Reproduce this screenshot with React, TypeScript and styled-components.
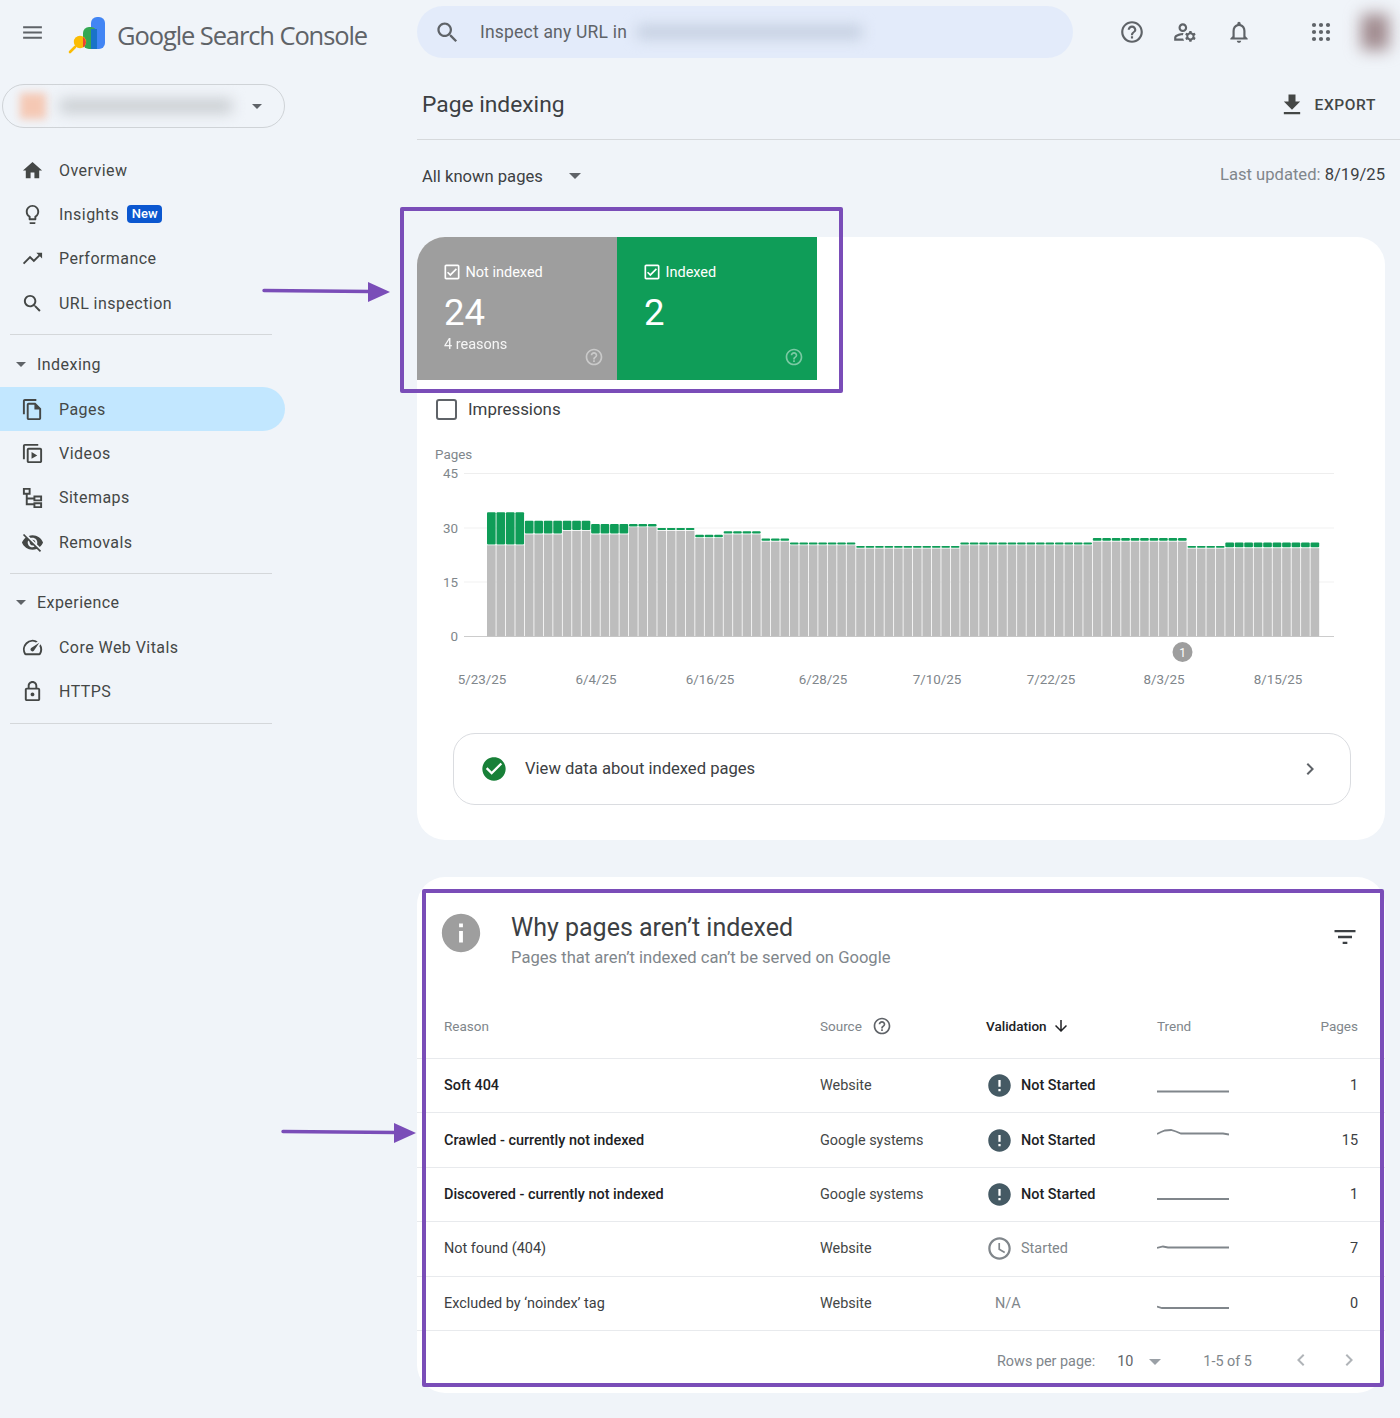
import React from "react";
import styled, { createGlobalStyle } from "styled-components";

const GlobalStyle = createGlobalStyle`
  html, body {
    margin: 0;
    padding: 0;
    background: #f0f4f9;
    font-family: "Roboto", "Liberation Sans", sans-serif;
    color: #3c4043;
  }
`;

const paths = {
  menu: "M3 18h18v-2H3v2zm0-5h18v-2H3v2zm0-7v2h18V6H3z",
  search: "M15.5 14h-.79l-.28-.27C15.41 12.59 16 11.11 16 9.5 16 5.91 13.09 3 9.5 3S3 5.91 3 9.5 5.91 16 9.5 16c1.61 0 3.09-.59 4.23-1.57l.27.28v.79l5 4.99L20.49 19l-4.99-5zm-6 0C7.01 14 5 11.99 5 9.5S7.01 5 9.5 5 14 7.01 14 9.5 11.99 14 9.5 14z",
  help: "M11 18h2v-2h-2v2zm1-16C6.48 2 2 6.48 2 12s4.48 10 10 10 10-4.48 10-10S17.52 2 12 2zm0 18c-4.41 0-8-3.59-8-8s3.59-8 8-8 8 3.59 8 8-3.59 8-8 8zm0-14c-2.21 0-4 1.79-4 4h2c0-1.1.9-2 2-2s2 .9 2 2c0 2-3 1.75-3 5h2c0-2.25 3-2.5 3-5 0-2.21-1.79-4-4-4z",
  manage: "M4 18v-.65c0-.34.16-.66.41-.81C6.1 15.53 8.03 15 10 15c.03 0 .05 0 .08.01.1-.7.3-1.37.59-1.98-.22-.02-.44-.03-.67-.03-2.42 0-4.68.67-6.61 1.82-.88.52-1.39 1.5-1.39 2.53V20h9.26c-.42-.6-.75-1.28-.97-2H4zM10 12c2.21 0 4-1.79 4-4s-1.79-4-4-4-4 1.79-4 4 1.79 4 4 4zm0-6c1.1 0 2 .9 2 2s-.9 2-2 2-2-.9-2-2 .9-2 2-2zM20.75 16c0-.22-.03-.42-.06-.63l1.14-1.01-1-1.73-1.45.49c-.32-.27-.68-.48-1.08-.63L18 11h-2l-.3 1.49c-.4.15-.76.36-1.08.63l-1.45-.49-1 1.73 1.14 1.01c-.03.21-.06.41-.06.63s.03.42.06.63l-1.14 1.01 1 1.73 1.45-.49c.32.27.68.48 1.08.63L16 21h2l.3-1.49c.4-.15.76-.36 1.08-.63l1.45.49 1-1.73-1.14-1.01c.03-.21.06-.41.06-.63zM17 18c-1.1 0-2-.9-2-2s.9-2 2-2 2 .9 2 2-.9 2-2 2z",
  bell: "M12 22c1.1 0 2-.9 2-2h-4c0 1.1.9 2 2 2zm6-6v-5c0-3.07-1.63-5.64-4.5-6.32V4c0-.83-.67-1.5-1.5-1.5s-1.5.67-1.5 1.5v.68C7.64 5.36 6 7.92 6 11v5l-2 2v1h16v-1l-2-2zm-2 1H8v-6c0-2.48 1.51-4.5 4-4.5s4 2.02 4 4.5v6z",
  home: "M10 20v-6h4v6h5v-8h3L12 3 2 12h3v8z",
  bulb: "M9 21c0 .5.4 1 1 1h4c.6 0 1-.5 1-1v-1H9v1zm3-19C8.1 2 5 5.1 5 9c0 2.4 1.2 4.5 3 5.7V17c0 .5.4 1 1 1h6c.6 0 1-.5 1-1v-2.3c1.8-1.3 3-3.4 3-5.7 0-3.9-3.1-7-7-7zm2.9 11.1l-.9.6V16h-4v-2.3l-.9-.6C7.8 12.2 7 10.6 7 9c0-2.8 2.2-5 5-5s5 2.2 5 5c0 1.6-.8 3.2-2.1 4.1z",
  trending: "M16 6l2.29 2.29-4.88 4.88-4-4L2 16.59 3.41 18l6-6 4 4 6.3-6.29L22 12V6z",
  pages: "M16 1H4c-1.1 0-2 .9-2 2v14h2V3h12V1zm-1 4H8c-1.1 0-1.99.9-1.99 2L6 21c0 1.1.89 2 1.99 2H19c1.1 0 2-.9 2-2V11l-6-6zM8 21V7h6v5h5v9H8z",
  videos: "M4 2h14v2H4v14H2V4c0-1.1.9-2 2-2zm4 4h12c1.1 0 2 .9 2 2v12c0 1.1-.9 2-2 2H8c-1.1 0-2-.9-2-2V8c0-1.1.9-2 2-2zm0 2v12h12V8H8zm3 2.5l6 3.5-6 3.5v-7z",
  sitemap: "M2 2h8v7H7v3h6v-2h9v6h-9v-2H7v4h6v-1h9v6h-9v-3H5V9H2V2zm2 2v3h4V4H4zm11 8v2h5v-2h-5zm0 7v2h5v-2h-5z",
  eyeOff: "M12 7c2.76 0 5 2.24 5 5 0 .65-.13 1.26-.36 1.83l2.92 2.92c1.51-1.26 2.7-2.89 3.43-4.75-1.73-4.39-6-7.5-11-7.5-1.4 0-2.74.25-3.98.7l2.16 2.16C10.74 7.13 11.35 7 12 7zM2 4.27l2.28 2.28.46.46C3.08 8.3 1.78 10.02 1 12c1.73 4.39 6 7.5 11 7.5 1.55 0 3.03-.3 4.38-.84l.42.42L19.73 22 21 20.73 3.27 3 2 4.27zM7.53 9.8l1.55 1.55c-.05.21-.08.43-.08.65 0 1.66 1.34 3 3 3 .22 0 .44-.03.65-.08l1.55 1.55c-.67.33-1.41.53-2.2.53-2.76 0-5-2.24-5-5 0-.79.2-1.53.53-2.2zm4.31-.78l3.15 3.15.02-.16c0-1.66-1.34-3-3-3l-.17.01z",
  speed: "M20.38 8.57l-1.23 1.85a8 8 0 0 1-.22 7.58H5.07A8 8 0 0 1 15.58 6.85l1.85-1.23A10 10 0 0 0 3.35 19a2 2 0 0 0 1.72 1h13.85a2 2 0 0 0 1.74-1 10 10 0 0 0-.27-10.44zm-9.79 6.84a2 2 0 0 0 2.83 0l5.66-8.49-8.49 5.66a2 2 0 0 0 0 2.83z",
  lock: "M18 8h-1V6c0-2.76-2.24-5-5-5S7 3.24 7 6v2H6c-1.1 0-2 .9-2 2v10c0 1.1.9 2 2 2h12c1.1 0 2-.9 2-2V10c0-1.1-.9-2-2-2zM9 6c0-1.66 1.34-3 3-3s3 1.34 3 3v2H9V6zm9 14H6V10h12v10zm-6-3c1.1 0 2-.9 2-2s-.9-2-2-2-2 .9-2 2 .9 2 2 2z",
  download: "M19 9h-4V3H9v6H5l7 7 7-7zM5 18v2h14v-2H5z",
  checkBox: "M19 3H5c-1.1 0-2 .9-2 2v14c0 1.1.9 2 2 2h14c1.1 0 2-.9 2-2V5c0-1.1-.9-2-2-2zm0 16H5V5h14v14zM17.99 9l-1.41-1.42-6.59 6.59-2.58-2.57-1.42 1.41 4 3.99z",
  checkCircle: "M12 2C6.48 2 2 6.48 2 12s4.48 10 10 10 10-4.48 10-10S17.52 2 12 2zm-2 15l-5-5 1.41-1.41L10 14.17l7.59-7.59L19 8l-9 9z",
  chevronRight: "M10 6L8.59 7.41 13.17 12l-4.58 4.59L10 18l6-6z",
  chevronLeft: "M15.41 7.41L14 6l-6 6 6 6 1.41-1.41L10.83 12z",
  info: "M12 2C6.48 2 2 6.48 2 12s4.48 10 10 10 10-4.48 10-10S17.52 2 12 2zm1 15h-2v-6h2v6zm0-8h-2V7h2v2z",
  filter: "M10 18h4v-2h-4v2zM3 6v2h18V6H3zm3 7h12v-2H6v2z",
  arrowDown: "M20 12l-1.41-1.41L13 16.17V4h-2v12.17l-5.58-5.59L4 12l8 8 8-8z",
  error: "M12 2C6.48 2 2 6.48 2 12s4.48 10 10 10 10-4.48 10-10S17.52 2 12 2zm1 15h-2v-2h2v2zm0-4h-2V7h2v6z",
  clock: "M11.99 2C6.47 2 2 6.48 2 12s4.47 10 9.99 10C17.52 22 22 17.52 22 12S17.52 2 11.99 2zM12 20c-4.42 0-8-3.58-8-8s3.58-8 8-8 8 3.58 8 8-3.58 8-8 8zm.5-13H11v6l5.25 3.15.75-1.23-4.5-2.67z",
};

const IconSvg = styled.svg<{ $size: number; $color: string; $fade?: number }>`
  width: ${(p) => p.$size}px;
  height: ${(p) => p.$size}px;
  fill: ${(p) => p.$color};
  opacity: ${(p) => p.$fade ?? 1};
  flex: none;
  display: block;
`;

function Icon({ name, size = 24, color = "#444746", fade }: { name: keyof typeof paths; size?: number; color?: string; fade?: number }) {
  return (
    <IconSvg viewBox="0 0 24 24" $size={size} $color={color} $fade={fade}>
      <path d={paths[name]} />
    </IconSvg>
  );
}

const Page = styled.div`
  position: relative;
  width: 1400px;
  height: 1418px;
  overflow: hidden;
  background: #f0f4f9;
`;

const TopBar = styled.header`
  display: flex;
  align-items: center;
  height: 64px;
`;

const Brand = styled.div`
  display: flex;
  align-items: center;
  width: 417px;
  flex: none;
  padding-left: 20px;
  box-sizing: border-box;
`;

const BrandName = styled.span`
  font-family: "Open Sans", sans-serif;
  font-size: 25.5px;
  letter-spacing: -1.1px;
  color: #5f6368;
  margin-left: 9px;
  padding-top: 6px;
  white-space: nowrap;
`;

const LogoSvg = styled.svg`
  width: 40px;
  height: 40px;
  margin: 7px 0 0 23px;
  flex: none;
`;

const SearchBar = styled.div`
  display: flex;
  align-items: center;
  width: 656px;
  height: 52px;
  flex: none;
  border-radius: 26px;
  background: #e3ebfa;
  padding-left: 17px;
  box-sizing: border-box;
`;

const SearchText = styled.span`
  font-size: 17.5px;
  letter-spacing: 0.2px;
  color: #5f6368;
  margin-left: 19px;
`;

const BlurBlock = styled.div<{ $w: number; $h: number; $color: string; $blur: number; $ml: number }>`
  width: ${(p) => p.$w}px;
  height: ${(p) => p.$h}px;
  background: ${(p) => p.$color};
  filter: blur(${(p) => p.$blur}px);
  margin-left: ${(p) => p.$ml}px;
  flex: none;
`;

const TopIcons = styled.div`
  display: flex;
  align-items: center;
  margin-left: 46px;
`;

const TopIcon = styled.span<{ $w: number }>`
  display: flex;
  width: ${(p) => p.$w}px;
  flex: none;
`;

const AppsGrid = styled.svg`
  width: 20px;
  height: 20px;
  fill: #5f6368;
  flex: none;
`;

const Body = styled.div`
  display: grid;
  grid-template-columns: 417px 983px;
`;

const Sidebar = styled.nav`
  display: flex;
  flex-direction: column;
  padding-top: 20px;
`;

const Property = styled.div`
  display: flex;
  align-items: center;
  width: 283px;
  height: 44px;
  margin-left: 2px;
  border: 1px solid #cfd3d7;
  border-radius: 22px;
  box-sizing: border-box;
  padding-left: 17px;
`;

const Caret = styled.span<{ $color?: string; $w?: number; $ml?: number }>`
  display: block;
  width: 0;
  height: 0;
  flex: none;
  border-left: ${(p) => p.$w ?? 5}px solid transparent;
  border-right: ${(p) => p.$w ?? 5}px solid transparent;
  border-top: ${(p) => p.$w ?? 5}px solid ${(p) => p.$color ?? "#5f6368"};
  margin-left: ${(p) => p.$ml ?? 0}px;
`;

const NavGroup = styled.div<{ $top: number }>`
  display: flex;
  flex-direction: column;
  margin-top: ${(p) => p.$top}px;
`;

const NavItem = styled.div<{ $active?: boolean }>`
  display: flex;
  align-items: center;
  width: 285px;
  height: 44.3px;
  box-sizing: border-box;
  padding-left: 21px;
  border-radius: 0 22px 22px 0;
  background: ${(p) => (p.$active ? "#c2e7ff" : "transparent")};
  font-size: 16px;
  font-weight: 400;
  letter-spacing: 0.45px;
  color: #444746;
`;

const NavLabel = styled.span`
  margin-left: 15px;
`;

const NewBadge = styled.span`
  background: #0b57d0;
  color: #fff;
  font-size: 13px;
  font-weight: 500;
  letter-spacing: 0;
  line-height: 18px;
  padding: 0 4.5px;
  border-radius: 4px;
  margin-left: 8px;
`;

const NavDivider = styled.div<{ $top: number }>`
  width: 262px;
  height: 1px;
  background: #d4d7da;
  margin: ${(p) => p.$top}px 0 0 10px;
`;

const SectionTitle = styled.div<{ $top: number }>`
  display: flex;
  align-items: center;
  height: 24px;
  margin-top: ${(p) => p.$top}px;
  padding-left: 16px;
  font-size: 16px;
  letter-spacing: 0.45px;
  color: #444746;
`;

const SectionLabel = styled.span`
  margin-left: 11px;
`;

const Main = styled.main`
  display: flex;
  flex-direction: column;
`;

const PageHead = styled.div`
  display: flex;
  align-items: center;
  justify-content: space-between;
  height: 76px;
  box-sizing: border-box;
  border-bottom: 1px solid #d6d9dc;
  padding: 6px 24px 0 5px;
`;

const PageTitle = styled.h1`
  margin: 0;
  font-size: 22.8px;
  font-weight: 400;
  color: #3c4043;
`;

const ExportButton = styled.div`
  display: flex;
  align-items: center;
  gap: 9px;
  font-size: 15.5px;
  font-weight: 500;
  letter-spacing: 0.6px;
  color: #444746;
`;

const FilterRow = styled.div`
  display: flex;
  align-items: center;
  justify-content: space-between;
  height: 97px;
  padding: 0 15px 25px 5px;
  box-sizing: border-box;
`;

const FilterSelect = styled.div`
  display: flex;
  align-items: center;
  font-size: 16.6px;
  color: #3c4043;
`;

const Updated = styled.div`
  font-size: 16.6px;
  color: #80868b;
  margin-top: -3px;
`;

const UpdatedDate = styled.span`
  color: #3c4043;
`;

const Card = styled.section<{ $height: number }>`
  display: flex;
  flex-direction: column;
  width: 968px;
  height: ${(p) => p.$height}px;
  background: #fff;
  border-radius: 28px;
  overflow: hidden;
  flex: none;
`;

const Tiles = styled.div`
  display: flex;
  height: 143px;
  flex: none;
`;

const Tile = styled.div<{ $bg: string }>`
  position: relative;
  width: 200px;
  box-sizing: border-box;
  padding: 25px 27px 0;
  background: ${(p) => p.$bg};
  color: #fff;
`;

const TileLabel = styled.div`
  display: flex;
  align-items: center;
  gap: 4px;
  height: 20px;
  margin-left: -2.5px;
  font-size: 14.5px;
`;

const TileValue = styled.div`
  font-size: 36.5px;
  line-height: 44px;
  margin-top: 9px;
`;

const TileNote = styled.div`
  font-size: 14.5px;
  line-height: 20px;
  opacity: 0.9;
`;

const TileHelp = styled.div`
  position: absolute;
  right: 13px;
  bottom: 13px;
`;

const CheckRow = styled.div`
  display: flex;
  align-items: center;
  gap: 11px;
  height: 22px;
  margin: 18px 0 0 19px;
  font-size: 16.9px;
  color: #3c4043;
`;

const EmptyCheck = styled.span`
  display: block;
  width: 21px;
  height: 21px;
  box-sizing: border-box;
  border: 2px solid #5f6368;
  border-radius: 3px;
`;

const ChartSvg = styled.svg`
  display: block;
  width: 968px;
  height: 250px;
  margin-top: 25px;
  flex: none;
`;

const ChartText = styled.text`
  font-family: "Roboto", sans-serif;
  font-size: 13.4px;
  fill: #80868b;
`;

const ViewData = styled.div`
  display: flex;
  align-items: center;
  height: 72px;
  margin: 38px 34px 0 36px;
  padding: 0 28px 0 26px;
  box-sizing: border-box;
  border: 1px solid #dadce0;
  border-radius: 22px;
  font-size: 16.6px;
  color: #3c4043;
`;

const ViewDataText = styled.span`
  flex: 1;
  margin-left: 17px;
  padding-bottom: 2px;
`;

const ReasonsCard = styled(Card)`
  margin-top: 37px;
`;

const ReasonsHead = styled.div`
  display: flex;
  height: 120px;
  box-sizing: border-box;
  padding: 33px 27px 0 21px;
  flex: none;
`;

const ReasonsText = styled.div`
  flex: 1;
  margin-left: 27px;
`;

const ReasonsTitle = styled.h2`
  margin: 2px 0 0;
  font-size: 25px;
  font-weight: 400;
  line-height: 32px;
  color: #3c4043;
`;

const ReasonsSub = styled.div`
  font-size: 16.6px;
  line-height: 24px;
  margin-top: 2px;
  color: #80868b;
`;

const FilterIcon = styled.div`
  margin: 13px -1px 0 0;
`;

const Row = styled.div<{ $header?: boolean }>`
  display: grid;
  grid-template-columns: 376px 166px 171px 1fr auto;
  align-items: center;
  height: ${(p) => (p.$header ? "62px" : "54.4px")};
  box-sizing: border-box;
  padding: 0 27px ${(p) => (p.$header ? "3px" : "0")};
  border-bottom: 1px solid #e8eaed;
  font-size: 14.45px;
  color: #444746;
  flex: none;
`;

const HeadCell = styled.div<{ $strong?: boolean; $gap?: number }>`
  display: flex;
  align-items: center;
  gap: ${(p) => p.$gap ?? 8}px;
  font-size: 13.5px;
  font-weight: ${(p) => (p.$strong ? 500 : 400)};
  color: ${(p) => (p.$strong ? "#202124" : "#80868b")};
  justify-content: flex-start;
`;

const ReasonCell = styled.div<{ $strong?: boolean }>`
  font-weight: ${(p) => (p.$strong ? 500 : 400)};
  color: ${(p) => (p.$strong ? "#202124" : "#3c4043")};
`;

const StatusCell = styled.div<{ $tone: "strong" | "muted" | "none" }>`
  display: flex;
  align-items: center;
  gap: 8px;
  font-weight: ${(p) => (p.$tone === "strong" ? 500 : 400)};
  color: ${(p) => (p.$tone === "strong" ? "#202124" : "#80868b")};
  padding-left: ${(p) => (p.$tone === "none" ? "9px" : "0")};
`;

const TrendSvg = styled.svg`
  display: block;
  width: 72px;
  height: 30px;
  fill: none;
  stroke: #80868b;
  stroke-width: 1.8;
`;

const CountCell = styled.div`
  text-align: right;
  color: #3c4043;
`;

const Pager = styled.div`
  display: flex;
  align-items: center;
  height: 62px;
  padding-left: 580px;
  font-size: 14.4px;
  color: #80868b;
`;

const PagerValue = styled.span`
  color: #5f6368;
  margin-left: 22px;
`;

const PagerRange = styled.span`
  margin-left: 42.5px;
`;

const PagerNav = styled.div`
  display: flex;
  gap: 24px;
  margin: -4px 0 0 37px;
`;

const Highlight = styled.div<{ $x: number; $y: number; $w: number; $h: number }>`
  position: absolute;
  left: ${(p) => p.$x}px;
  top: ${(p) => p.$y}px;
  width: ${(p) => p.$w}px;
  height: ${(p) => p.$h}px;
  box-sizing: border-box;
  border: 4px solid #7a4db8;
  border-radius: 2px;
  pointer-events: none;
`;

const ArrowSvg = styled.svg<{ $x: number; $y: number; $w: number }>`
  position: absolute;
  left: ${(p) => p.$x}px;
  top: ${(p) => p.$y}px;
  width: ${(p) => p.$w}px;
  height: 24px;
`;

const navTop = [
  { icon: "home", label: "Overview" },
  { icon: "bulb", label: "Insights", badge: true },
  { icon: "trending", label: "Performance" },
  { icon: "search", label: "URL inspection" },
] as const;

const navIndexing = [
  { icon: "pages", label: "Pages", active: true },
  { icon: "videos", label: "Videos" },
  { icon: "sitemap", label: "Sitemaps" },
  { icon: "eyeOff", label: "Removals" },
] as const;

const navExperience = [
  { icon: "speed", label: "Core Web Vitals" },
  { icon: "lock", label: "HTTPS" },
] as const;

function NavRow({ icon, label, active, badge }: { icon: keyof typeof paths; label: string; active?: boolean; badge?: boolean }) {
  return (
    <NavItem $active={active}>
      <Icon name={icon} size={23} />
      <NavLabel>{label}</NavLabel>
      {badge && <NewBadge>New</NewBadge>}
    </NavItem>
  );
}

// count of bars, not indexed, not indexed + indexed
const barGroups = [
  [4, 25.2, 34.3], [4, 28.2, 32], [3, 29.2, 32], [4, 28.2, 31.1], [3, 30.2, 31.1],
  [4, 29.2, 30], [3, 27.2, 28.1], [4, 28.2, 29.1], [3, 26.2, 27.1], [7, 25.2, 26],
  [11, 24.3, 25], [14, 25.2, 26], [10, 26.2, 27.2], [4, 24.3, 25], [10, 24.4, 26],
];

const bars = barGroups.flatMap(([n, low, top]) => Array.from({ length: n }, () => ({ low, top })));

const BASE = 636.5;
const UNIT = 3.62;
const BAR_W = 833 / 88;

const yTicks = [
  { v: "45", y: 473.5, line: "#eeeeee" },
  { v: "30", y: 528, line: "#f1f1f1" },
  { v: "15", y: 582, line: "#f1f1f1" },
  { v: "0", y: 636.5, line: "#cccccc" },
];

const xTicks = [
  { t: "5/23/25", x: 482 },
  { t: "6/4/25", x: 596 },
  { t: "6/16/25", x: 710 },
  { t: "6/28/25", x: 823 },
  { t: "7/10/25", x: 937 },
  { t: "7/22/25", x: 1051 },
  { t: "8/3/25", x: 1164 },
  { t: "8/15/25", x: 1278 },
];

function Chart() {
  return (
    <ChartSvg viewBox="417 445 968 250">
      <ChartText x="435" y="459">Pages</ChartText>
      {yTicks.map((t) => (
        <g key={t.v}>
          <line x1="464" x2="1334" y1={t.y} y2={t.y} stroke={t.line} strokeWidth="1" />
          <ChartText x="458" y={t.y + 4.5} textAnchor="end">{t.v}</ChartText>
        </g>
      ))}
      {bars.map((b, i) => {
        const x = 487 + i * BAR_W;
        const lowY = BASE - b.low * UNIT;
        const topY = BASE - b.top * UNIT;
        return (
          <g key={i}>
            <rect x={x} y={lowY} width={BAR_W - 0.8} height={BASE - lowY} fill="#bdbdbd" />
            <rect x={x} y={topY} width={BAR_W - 0.8} height={Math.max(lowY - topY - 0.8, 1.2)} rx="1" fill="#0f9d58" />
          </g>
        );
      })}
      <circle cx="1182.5" cy="652" r="10" fill="#9e9e9e" />
      <text x="1182.5" y="656.5" textAnchor="middle" fontSize="12" fontFamily="Roboto, sans-serif" fill="#fff">1</text>
      {xTicks.map((t) => (
        <ChartText key={t.t} x={t.x} y="683.5" textAnchor="middle">{t.t}</ChartText>
      ))}
    </ChartSvg>
  );
}

const rows = [
  { reason: "Soft 404", source: "Website", status: "Not Started", tone: "strong", count: "1", trend: "0,20.5 72,20.5" },
  { reason: "Crawled - currently not indexed", source: "Google systems", status: "Not Started", tone: "strong", count: "15", trend: "0,9 4,7 8,5.5 14,5 19,6.5 24,8.5 40,8.5 66,8.5 72,9.5" },
  { reason: "Discovered - currently not indexed", source: "Google systems", status: "Not Started", tone: "strong", count: "1", trend: "0,20 72,20" },
  { reason: "Not found (404)", source: "Website", status: "Started", tone: "muted", count: "7", trend: "0,14 6,12.5 11,13.5 72,13.5" },
  { reason: "Excluded by ‘noindex’ tag", source: "Website", status: "N/A", tone: "none", count: "0", trend: "0,18.5 5,20 72,20" },
] as const;

export default function App() {
  return (
    <Page>
      <GlobalStyle />
      <TopBar>
        <Brand>
          <Icon name="menu" size={25} color="#5f6368" />
          <LogoSvg viewBox="0 0 40 40">
            <rect x="23" y="1" width="14" height="32" rx="6" fill="#4285f4" />
            <rect x="15" y="11" width="14" height="22" rx="6" fill="#34a853" />
            <rect x="23" y="13" width="6" height="20" fill="#1a73c8" />
            <path d="M7 31 L2 36" stroke="#fbbc04" strokeWidth="2.6" strokeLinecap="round" />
            <circle cx="12" cy="26" r="6.2" fill="#fbbc04" />
            <path d="M15 21 a6.2 6.2 0 0 1 0 10.4z" fill="#ea4335" />
          </LogoSvg>
          <BrandName>Google Search Console</BrandName>
        </Brand>
        <SearchBar>
          <Icon name="search" size={27} color="#5f6368" />
          <SearchText>Inspect any URL in</SearchText>
          <BlurBlock $w={225} $h={14} $color="#c5cfe0" $blur={7} $ml={10} />
        </SearchBar>
        <TopIcons>
          <TopIcon $w={53}><Icon name="help" size={26} color="#5f6368" /></TopIcon>
          <TopIcon $w={54}><Icon name="manage" size={26} color="#5f6368" /></TopIcon>
          <TopIcon $w={85}><Icon name="bell" size={26} color="#5f6368" /></TopIcon>
          <AppsGrid viewBox="0 0 20 20">
            {[3, 10, 17].flatMap((y) => [3, 10, 17].map((x) => <circle key={`${x}-${y}`} cx={x} cy={y} r="2.1" />))}
          </AppsGrid>
          <BlurBlock $w={28} $h={36} $color="#a08a8e" $blur={8} $ml={30} />
        </TopIcons>
      </TopBar>
      <Body>
        <Sidebar>
          <Property>
            <BlurBlock $w={26} $h={26} $color="#f5c8b4" $blur={4} $ml={0} />
            <BlurBlock $w={172} $h={14} $color="#c8ccd0" $blur={7} $ml={14} />
            <Caret $ml={20} />
          </Property>
          <NavGroup $top={20}>
            {navTop.map((n) => (
              <NavRow key={n.label} icon={n.icon} label={n.label} badge={"badge" in n} />
            ))}
          </NavGroup>
          <NavDivider $top={9} />
          <SectionTitle $top={17}>
            <Caret />
            <SectionLabel>Indexing</SectionLabel>
          </SectionTitle>
          <NavGroup $top={11}>
            {navIndexing.map((n) => (
              <NavRow key={n.label} icon={n.icon} label={n.label} active={"active" in n} />
            ))}
          </NavGroup>
          <NavDivider $top={9} />
          <SectionTitle $top={16}>
            <Caret />
            <SectionLabel>Experience</SectionLabel>
          </SectionTitle>
          <NavGroup $top={11}>
            {navExperience.map((n) => (
              <NavRow key={n.label} icon={n.icon} label={n.label} />
            ))}
          </NavGroup>
          <NavDivider $top={9} />
        </Sidebar>
        <Main>
          <PageHead>
            <PageTitle>Page indexing</PageTitle>
            <ExportButton>
              <Icon name="download" size={28} color="#444746" />
              EXPORT
            </ExportButton>
          </PageHead>
          <FilterRow>
            <FilterSelect>
              All known pages
              <Caret $w={6.5} $ml={26} />
            </FilterSelect>
            <Updated>
              Last updated: <UpdatedDate>8/19/25</UpdatedDate>
            </Updated>
          </FilterRow>
          <Card $height={603}>
            <Tiles>
              <Tile $bg="#9e9e9e">
                <TileLabel>
                  <Icon name="checkBox" size={20} color="#fff" />
                  Not indexed
                </TileLabel>
                <TileValue>24</TileValue>
                <TileNote>4 reasons</TileNote>
                <TileHelp><Icon name="help" size={20} color="#fff" fade={0.45} /></TileHelp>
              </Tile>
              <Tile $bg="#0f9d58">
                <TileLabel>
                  <Icon name="checkBox" size={20} color="#fff" />
                  Indexed
                </TileLabel>
                <TileValue>2</TileValue>
                <TileHelp><Icon name="help" size={20} color="#fff" fade={0.45} /></TileHelp>
              </Tile>
            </Tiles>
            <CheckRow>
              <EmptyCheck />
              Impressions
            </CheckRow>
            <Chart />
            <ViewData>
              <Icon name="checkCircle" size={28} color="#188038" />
              <ViewDataText>View data about indexed pages</ViewDataText>
              <Icon name="chevronRight" size={24} color="#5f6368" />
            </ViewData>
          </Card>
          <ReasonsCard $height={516}>
            <ReasonsHead>
              <Icon name="info" size={46} color="#9e9e9e" />
              <ReasonsText>
                <ReasonsTitle>Why pages aren’t indexed</ReasonsTitle>
                <ReasonsSub>Pages that aren’t indexed can’t be served on Google</ReasonsSub>
              </ReasonsText>
              <FilterIcon><Icon name="filter" size={28} color="#3c4043" /></FilterIcon>
            </ReasonsHead>
            <Row $header>
              <HeadCell>Reason</HeadCell>
              <HeadCell $gap={10}>
                Source
                <Icon name="help" size={20} color="#5f6368" />
              </HeadCell>
              <HeadCell $strong $gap={5}>
                Validation
                <Icon name="arrowDown" size={18} color="#202124" />
              </HeadCell>
              <HeadCell>Trend</HeadCell>
              <HeadCell>Pages</HeadCell>
            </Row>
            {rows.map((r) => (
              <Row key={r.reason}>
                <ReasonCell $strong={r.tone === "strong"}>{r.reason}</ReasonCell>
                <div>{r.source}</div>
                <StatusCell $tone={r.tone}>
                  {r.tone === "strong" && <Icon name="error" size={27} color="#455a64" />}
                  {r.tone === "muted" && <Icon name="clock" size={27} color="#80868b" />}
                  {r.status}
                </StatusCell>
                <TrendSvg viewBox="0 0 72 30">
                  <polyline points={r.trend} />
                </TrendSvg>
                <CountCell>{r.count}</CountCell>
              </Row>
            ))}
            <Pager>
              Rows per page:
              <PagerValue>10</PagerValue>
              <Caret $color="#9aa0a6" $w={6.5} $ml={15.5} />
              <PagerRange>1-5 of 5</PagerRange>
              <PagerNav>
                <Icon name="chevronLeft" size={24} color="#b0b4b8" />
                <Icon name="chevronRight" size={24} color="#b0b4b8" />
              </PagerNav>
            </Pager>
          </ReasonsCard>
        </Main>
      </Body>
      <Highlight $x={400} $y={207} $w={443} $h={186} />
      <Highlight $x={422} $y={889} $w={962} $h={498} />
      <ArrowSvg $x={260} $y={280} $w={132} viewBox="0 0 132 24">
        <path d="M4 10.5 L110 11.5" stroke="#7a4db8" strokeWidth="3.4" strokeLinecap="round" />
        <path d="M108 2 L130 12 L108 22z" fill="#7a4db8" />
      </ArrowSvg>
      <ArrowSvg $x={279} $y={1121} $w={139} viewBox="0 0 139 24">
        <path d="M4 10.5 L117 11.5" stroke="#7a4db8" strokeWidth="3.4" strokeLinecap="round" />
        <path d="M115 2 L137 12 L115 22z" fill="#7a4db8" />
      </ArrowSvg>
    </Page>
  );
}
